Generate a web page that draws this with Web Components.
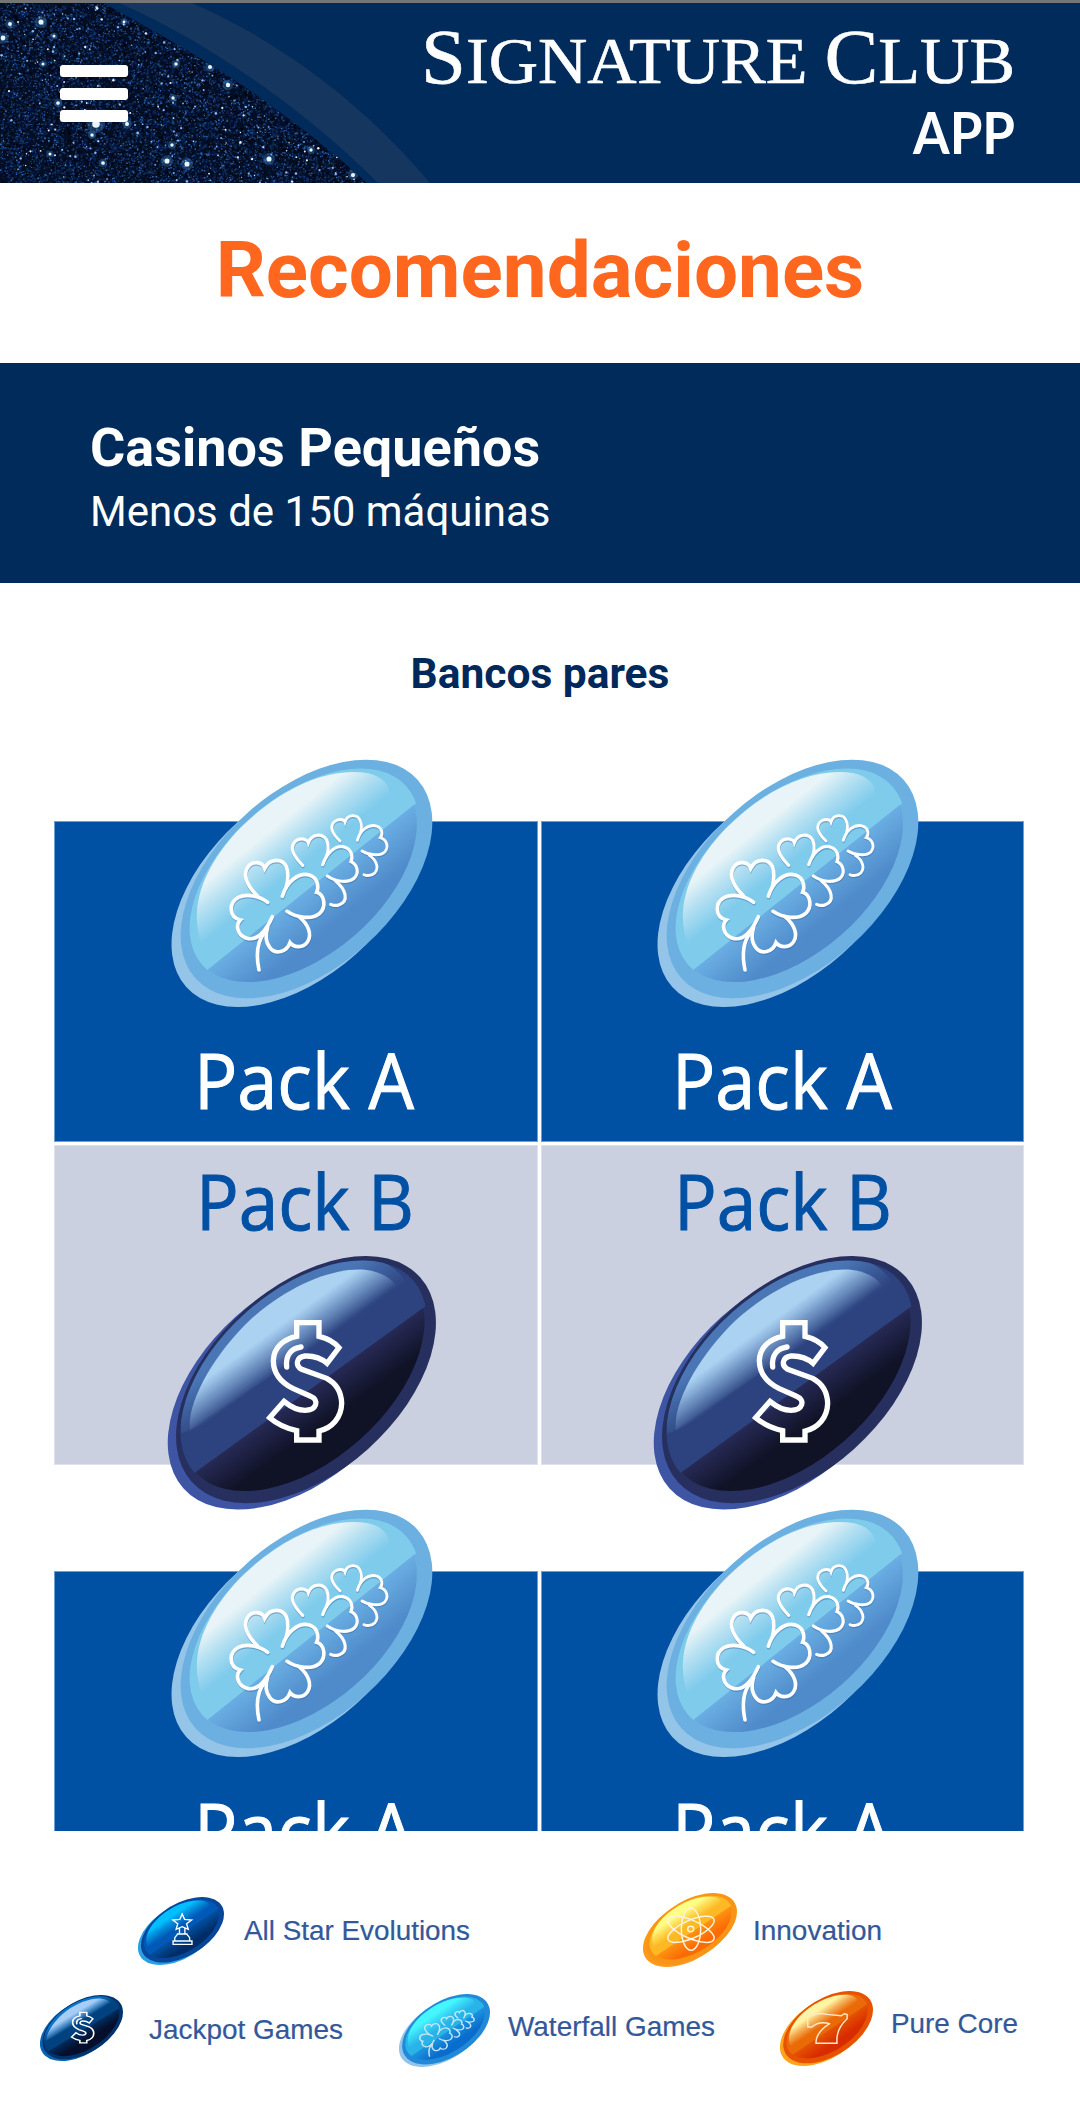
<!DOCTYPE html>
<html lang="es">
<head>
<meta charset="utf-8">
<title>Signature Club App</title>
<style>
html,body{margin:0;background:#fff}
body{width:1080px;height:2124px;overflow:hidden;font-family:Roboto,sans-serif}
</style>
</head>
<body>
<club-app></club-app>
<script>
const define = (name, render) => customElements.define(name, class extends HTMLElement {
  connectedCallback() {
    if (this.shadowRoot) return;
    this.attachShadow({ mode: 'open' }).innerHTML = render(this);
  }
});

/* A single line of text fitted to a width; the box is as tall as its capitals. */
define('fit-label', el => {
  const w = el.getAttribute('w'), size = +el.getAttribute('size'), cap = el.getAttribute('cap');
  return `<style>
    :host{display:block;width:${w}px;height:${cap}px;flex:none}
    svg{display:block;overflow:visible}
    text{fill:currentColor;stroke:currentColor;stroke-width:var(--heft,0);font-size:${size}px;font-family:inherit;font-weight:inherit}
  </style>
  <svg width="${w}" height="${cap}"><text x="0" y="${cap}" textLength="${w}" lengthAdjust="spacingAndGlyphs">${el.dataset.text}</text></svg>`;
});

const clovers = `
  <g id="c">
    <g stroke-width="11">
      <path d="M353,487 C330,468 290,460 265,472 C235,488 236,532 271,540 C256,555 262,585 288,594 C325,606 350,568 367,530"/>
      <path d="M322,467 C300,447 275,410 292,383 C306,361 337,364 344,385 C360,353 397,355 409,380 C417,400 413,425 409,441"/>
      <path d="M397,469 C410,425 446,396 478,405 C505,414 507,442 500,457 C525,465 529,502 509,520 C486,540 440,534 411,514"/>
      <path d="M447,530 C474,553 487,582 473,605 C459,627 430,622 420,608 C410,637 376,645 359,622 C345,603 348,577 353,562"/>
      <path d="M343,578 C323,604 317,642 327,690"/>
    </g>
    <g stroke-width="9.500">
      <path d="M458,376 C434,352 417,324 435,305 C450,290 472,298 475,308 C485,281 517,278 530,300 C538,318 534,340 529,350"/>
      <path d="M518,374 C529,343 552,315 580,320 C605,326 610,350 603,365 C624,375 627,400 613,414 C594,430 558,426 532,408"/>
      <path d="M556,422 C590,450 596,484 568,494 C560,497 550,497 542,493"/>
    </g>
    <g stroke-width="8.500">
      <path d="M570,303 C550,284 536,263 552,246 C565,234 582,238 585,246 C592,222 622,220 631,243 C637,257 634,270 632,276"/>
      <path d="M622,301 C631,270 655,251 680,258 C698,265 699,283 691,293 C712,300 716,322 705,335 C690,350 655,345 636,333"/>
      <path d="M658,346 C682,362 686,385 675,398 C665,408 650,408 642,404"/>
    </g>
  </g>`;
const glyphs = {
  clover: `<g fill="none" stroke="#3a6eaa" opacity=".45" transform="translate(1 4)" stroke-linecap="round">${clovers}</g>
    <g fill="none" stroke="#fff" stroke-linecap="round">${clovers}</g>`,
  cloverSmall: `<g fill="none" stroke="#c5e6fa" stroke-linecap="round">${clovers.replace(/stroke-width="[\d.]+"/g, 'stroke-width="13"')}</g>`,
  dollar: `<g fill="none" stroke="#fff" stroke-width="16">
    <path d="M440,289 V248 H507 V289 C532,295 552,305 567,323 L531,370 C512,353 490,347 465,348 C438,352 435,377 455,388 L530,415 C562,432 574,458 575,490 C574,533 546,564 507,573 V600 H440 V572 C406,564 380,551 359,533 L402,484 C424,502 442,511 465,511 C500,511 510,480 480,468 L430,446 C388,425 370,398 370,362 C371,320 404,296 440,289 Z"/>
    <path d="M410,381 C406,345 425,325 453,321" stroke-linecap="round"/></g>`,
  trophy: `<g transform="translate(65 59) scale(3.067 3.637) translate(-355 -81)" fill="none" stroke="#fff" stroke-width="4">
    <path d="M486,132 L493,148 L514,150 L499,161 L504,178 L486,170 L468,178 L473,161 L458,150 L479,148 Z"/>
    <path d="M478,174 V191 M494,174 V191 M470,192 H502 M472,193 L464,203 V213 H508 V203 L500,193 M459,213 H515 V223 H459 Z"/></g>`,
  atom: `<g transform="translate(65 59) scale(2.773 3.342) translate(-69 -69)" fill="none" stroke="#fff3dc" stroke-width="4.500">
    <ellipse cx="213" cy="178" rx="29" ry="63"/>
    <ellipse cx="213" cy="178" rx="75" ry="27" transform="rotate(24 213 178)"/>
    <ellipse cx="213" cy="178" rx="75" ry="27" transform="rotate(-24 213 178)"/>
    <ellipse cx="212" cy="177" rx="9" ry="8"/></g>`,
  seven: `<g transform="translate(65 59) scale(2.823 3.357) translate(-485 -364)" fill="none" stroke="#ffeacb" stroke-width="4.200" stroke-linejoin="round">
    <path d="M567,432 L580,437 Q600,426 625,433 L668,437 L676,431 L685,433 V446 Q650,478 655,518 H592 Q592,485 633,460 Q600,452 580,470 H568 Z"/></g>`
};
const skins = {
  waterfall: { back:'#94c4e8', rim:'#6bb0e0', up:'#7fcbec', hl:'#e8f4f7', lo1:'#69ade2', lo2:'#4f8aca', edge:'#7fcbec', glyph:'clover', box:'0 0 900 870' },
  jackpot:   { back:'#3d55a3', rim:'#262f5e', up:'#2d437f', hl:'#abd2f1', lo1:'#262a55', lo2:'#101226', edge:'#4a76b6', glyph:'dollar', box:'0 0 900 870' },
  star:      { back:'#2aa0e2', rim:'#08469a', up:'#0059b6', hl:'#00bfff', lo1:'#004f9f', lo2:'#002d68', edge:'#0080d8', glyph:'trophy' },
  jackpotS:  { back:'#0a64b4', rim:'#00336c', up:'#00417f', hl:'#a6cdf6', lo1:'#002c5c', lo2:'#050f2c', edge:'#0a74cc', glyph:'dollar' },
  waterfallS:{ back:'#93c3ea', rim:'#2189d6', up:'#29b4e8', hl:'#45f6ff', lo1:'#1b93e0', lo2:'#0a6ccc', edge:'#29b4e8', glyph:'cloverSmall' },
  innovation:{ back:'#ff9a1a', rim:'#f99516', up:'#fdb823', hl:'#ffff88', lo1:'#ff9213', lo2:'#fb6b04', edge:'#ffd633', glyph:'atom' },
  core:      { back:'#ffa21c', rim:'#e65200', up:'#ea6a08', hl:'#fff3a4', lo1:'#e45200', lo2:'#d82b00', edge:'#f5a030', glyph:'seven' }
};

/* Glossy tilted oval; the skin sets its colours and emblem. */
define('gloss-pill', el => {
  const k = el.getAttribute('skin'), s = skins[k], dark = s.glyph === 'dollar';
  const body = dark ? `
    <ellipse cx="443" cy="438" rx="460" ry="279" transform="rotate(-41.9 443 438)" fill="${s.back}"/>
    <ellipse cx="468" cy="419" rx="460" ry="279" transform="rotate(-41.9 468 419)" fill="${s.rim}"/>
    <clipPath id="in"><ellipse cx="461" cy="409" rx="437" ry="258" transform="rotate(-41.4 461 409)"/></clipPath>
    <g clip-path="url(#in)">
      <path d="M0,0 H900 V150 L832,195 L125,705 L0,795 Z" fill="${s.up}"/>
      <path d="M93,580 C60,200 400,20 640,50 C710,60 755,95 768,132 L740,155 L110,575 Z" fill="url(#edge)"/>
      <path d="M120,572 C108,490 190,345 300,240 C420,132 555,80 650,90 C705,97 735,125 747,153 C640,270 300,480 120,572 Z" fill="url(#hl)"/>
    </g>
    <clipPath id="low"><ellipse cx="458" cy="409" rx="432" ry="256" transform="rotate(-41.4 458 409)"/></clipPath>
    <path clip-path="url(#low)" d="M900,146 L832,195 L125,705 L0,795 V870 H900 Z" fill="url(#lo)"/>`
  : `
    <ellipse cx="442" cy="443" rx="447" ry="266" transform="rotate(-41.8 442 443)" fill="${s.back}"/>
    <ellipse cx="469.500" cy="417" rx="447" ry="266" transform="rotate(-41.8 469.500 417)" fill="${s.rim}"/>
    <clipPath id="in"><ellipse cx="463" cy="407" rx="407" ry="237" transform="rotate(-41 463 407)"/></clipPath>
    <g clip-path="url(#in)"><path d="M0,0 H900 V109 L808,182 L160,700 L0,828 Z" fill="${s.up}"/></g>
    <path d="M156,612 C115,510 155,385 270,265 C400,135 545,80 655,100 C700,110 722,140 717,165 C640,250 350,500 156,612 Z" fill="url(#hl)"/>
    <clipPath id="low"><ellipse cx="459" cy="407" rx="403" ry="237" transform="rotate(-41 459 407)"/></clipPath>
    <path clip-path="url(#low)" d="M900,109 L808,182 L160,700 L0,828 V870 H900 Z" fill="url(#lo)"/>`;
  const box = s.box || (dark ? '54 48 804 761' : '65 59 782 742');
  return `<style>:host{display:block;flex:none}svg{display:block;width:100%;height:100%}</style>
  <svg viewBox="${box}" preserveAspectRatio="none">
    <defs>
      <linearGradient id="hl" gradientUnits="userSpaceOnUse" ${dark ? 'x1="246" y1="341" x2="319" y2="442"' : 'x1="262" y1="327" x2="359" y2="449"'}>
        <stop offset="0" stop-color="${s.hl}"/><stop offset=".12" stop-color="${s.hl}"/><stop offset=".5" stop-color="${s.hl}" stop-opacity=".52"/><stop offset="1" stop-color="${s.hl}" stop-opacity="0"/></linearGradient>
      <linearGradient id="lo" gradientUnits="userSpaceOnUse" x1="470" y1="455" x2="${dark ? 535 : 550}" y2="${dark ? 545 : 555}">
        <stop offset="0" stop-color="${s.lo1}"/><stop offset="1" stop-color="${s.lo2}"/></linearGradient>
      <linearGradient id="edge" gradientUnits="userSpaceOnUse" x1="246" y1="341" x2="325" y2="450">
        <stop offset="0" stop-color="${s.edge}"/><stop offset="1" stop-color="${s.edge}" stop-opacity="0"/></linearGradient>
    </defs>
    ${body}${glyphs[s.glyph]}
  </svg>`;
});

/* Star field with a seeded generator so it is the same on every load. */
define('star-field', () => {
  let seed = 7321;
  const r = () => (seed = (seed * 1664525 + 1013904223) % 4294967296) / 4294967296;
  const layer = (n, color, a, b, op) => {
    let d = '';
    for (let i = 0; i < n; i++) {
      const x = (r() * 370).toFixed(1), y = (r() * 180).toFixed(1), s = (a + r() * (b - a)).toFixed(1);
      d += `M${x},${y}h${s}v${s}h-${s}z`;
    }
    return `<path d="${d}" fill="${color}" opacity="${op}"/>`;
  };
  let dots = '';
  for (let i = 0; i < 330; i++) dots += `<circle cx="${(r()*370).toFixed(1)}" cy="${(r()*180).toFixed(1)}" r="${(.6 + r()*.7).toFixed(1)}" fill="${r() > .35 ? '#8db6ee' : '#e4f0ff'}"/>`;
  const bright = [[41,19,3],[10,21,2.3],[3,35,2.8],[54,33,1.8],[210,64,2.4],[228,82,2.6],[176,61,2],[96,121,4.5],[127,121,2.4],[167,158,3],[187,161,3],[269,156,3],[311,147,2],[353,172,2.5],[103,160,2.2],[172,142,2],[58,100,2.2],[173,95,2],[92,132,2],[50,151,1.8],[43,61,1.8],[124,19,1.7]];
  return `<style>:host{display:block;width:432px;height:180px}svg{display:block}</style>
  <svg width="432" height="180">
    <clipPath id="k"><path d="M0,0 H103 Q162,32 213,63 Q300,119 367,180 H0 Z"/></clipPath>
    <g clip-path="url(#k)">
      <rect width="370" height="180" fill="#030d24"/>
      ${layer(7000,'#0f3a7c',.9,2.2,.55)}${layer(2200,'#00040c',1,2.8,.75)}${layer(4200,'#1f57a6',.7,1.7,.65)}${layer(2000,'#4a86d8',.7,1.6,.75)}
      ${dots}
      ${bright.map(([x,y,q]) => `<circle cx="${x}" cy="${y}" r="${q*2}" fill="#4f9be6" opacity=".3"/><circle cx="${x}" cy="${y}" r="${q*.85}" fill="#e6f5ff"/>`).join('')}
    </g>
    <path d="M119,0 C215,42 310,112 378,180 H430 C370,108 288,42 192,0 Z" fill="#14365f"/>
  </svg>`;
});

define('menu-button', () => `<style>
  :host{display:flex;flex-direction:column;gap:10.5px;width:68px}
  i{height:12px;border-radius:3px;background:#fff}
</style><i></i><i></i><i></i>`);

define('app-header', () => `<style>
  :host{display:grid;grid-template:180px / 1fr;background:#002b5a;border-top:3px solid #757575;overflow:hidden}
  star-field,menu-button,.brand{grid-area:1/1}
  menu-button{margin:62px 0 0 60px}
  .brand{justify-self:end;margin:28px 65px 0 0;display:flex;flex-direction:column;align-items:flex-end;color:#fff}
  .name{font-family:"Liberation Serif",serif;--heft:.6px}
  .app{font-family:Lato,sans-serif;font-weight:700;margin-top:29px}
</style>
<star-field></star-field><menu-button></menu-button>
<div class="brand">
  <fit-label class="name" w="594" size="78" cap="52" data-text="S<tspan font-size='66'>IGNATURE </tspan>C<tspan font-size='66'>LUB</tspan>"></fit-label>
  <fit-label class="app" w="102" size="58" cap="42" data-text="APP"></fit-label>
</div>`);

define('page-title', () => `<style>
  :host{display:flex;justify-content:center;align-items:center;height:180px}
  h1{margin:0 0 7px;font:700 78.2px/90px Roboto,sans-serif;color:#ff671f}
</style><h1><slot></slot></h1>`);

define('section-band', () => `<style>
  :host{display:block;height:220px;box-sizing:border-box;padding:53px 90px 0;background:#002b5a;color:#fff}
  h2{margin:0;font:700 54px/64px Roboto,sans-serif}
  p{margin:2px 0 0;font:400 42px/60px Roboto,sans-serif}
</style><h2><slot name="title"></slot></h2><p><slot></slot></p>`);

define('pack-cell', el => {
  const b = el.hasAttribute('b');
  return `<style>
    :host{display:flex;flex-direction:column;position:relative;box-sizing:border-box;width:484px;height:${b ? 320 : 321}px;
      background:${b ? '#cbd0e1' : '#0050a4'};border:1px solid ${b ? '#dfe2ec' : '#6ca0d2'};
      color:${b ? '#0050a4' : '#fff'};font-family:"Open Sans",sans-serif;--heft:1px}
    fit-label{margin:${b ? '29px 0 0 calc(var(--tx) + 2px)' : '232px 0 0 var(--tx)'}}
    gloss-pill{position:absolute;width:300px;height:290px;left:var(--px);top:${b ? 94 : -82}px}
  </style>
  <gloss-pill skin="${b ? 'jackpot' : 'waterfall'}"></gloss-pill>
  <fit-label w="${b ? 218 : 220}" size="77" cap="55" data-text="${b ? 'Pack B' : 'Pack A'}"></fit-label>`;
});

/* Rows of packs; a "short" bank has only its first row. */
define('pack-bank', el => `<style>
  :host{display:grid;grid-template-columns:484px 483px;gap:3px;height:750px;align-content:start;flex:none}
  .l{--px:95px;--tx:139px}
  .r{--px:94px;--tx:130px;width:483px}
</style>
<pack-cell class="l"></pack-cell><pack-cell class="r"></pack-cell>
${el.hasAttribute('short') ? '' : '<pack-cell class="l" b></pack-cell><pack-cell class="r" b></pack-cell>'}`);

define('bank-list', () => `<style>
  :host{display:flex;flex-direction:column;height:1248px;box-sizing:border-box;padding:0 54px}
  h3{margin:61px 0 0;font:700 42.5px/60px Roboto,sans-serif;color:#00295b;text-align:center}
  .view{margin:35px -10px 0;padding:82px 10px 0;height:1010px;overflow:hidden;flex:none}
</style><h3><slot></slot></h3>
<div class="view"><pack-bank></pack-bank><pack-bank short></pack-bank></div>`);

define('legend-item', el => {
  const a = n => el.getAttribute(n);
  return `<style>
    :host{display:flex;align-items:flex-start;color:#33589a;font-family:"Liberation Sans",sans-serif;flex:none;--heft:.2px}
    gloss-pill{width:${a('pw')}px;height:${a('ph')}px}
    fit-label{margin:${a('dy')}px 0 0 ${a('gap')}px}
  </style><gloss-pill skin="${a('skin')}"></gloss-pill>
  <fit-label w="${a('tw')}" size="27.500" cap="20" data-text="${a('label')}"></fit-label>`;
});

define('pack-legend', () => `<style>
  :host{display:flex;flex-direction:column}
  div{display:flex;align-items:flex-start}
  .one{padding:62px 0 0 138px;height:98px}
  .two{padding-left:40px}
  .s{margin-top:4px}.i{margin-left:173px}
  .j{margin-top:4px}.w{margin:3px 0 0 56px}.c{margin-left:65px}
</style>
<div class="one">
  <legend-item class="s" skin="star" pw="86" ph="68" gap="20" dy="23" tw="226" label="All Star Evolutions"></legend-item>
  <legend-item class="i" skin="innovation" pw="94" ph="74" gap="16" dy="27" tw="129" label="Innovation"></legend-item>
</div>
<div class="two">
  <legend-item class="j" skin="jackpotS" pw="83" ph="66" gap="26" dy="24" tw="194" label="Jackpot Games"></legend-item>
  <legend-item class="w" skin="waterfallS" pw="91" ph="73" gap="18" dy="22" tw="207" label="Waterfall Games"></legend-item>
  <legend-item class="c" skin="core" pw="93" ph="75" gap="18" dy="22" tw="127" label="Pure Core"></legend-item>
</div>`);

define('club-app', () => `<style>:host{display:flex;flex-direction:column;width:1080px;height:2124px;background:#fff}</style>
<app-header></app-header>
<page-title>Recomendaciones</page-title>
<section-band><span slot="title">Casinos Pequeños</span>Menos de 150 máquinas</section-band>
<bank-list>Bancos pares</bank-list>
<pack-legend></pack-legend>`);
</script>
</body>
</html>
